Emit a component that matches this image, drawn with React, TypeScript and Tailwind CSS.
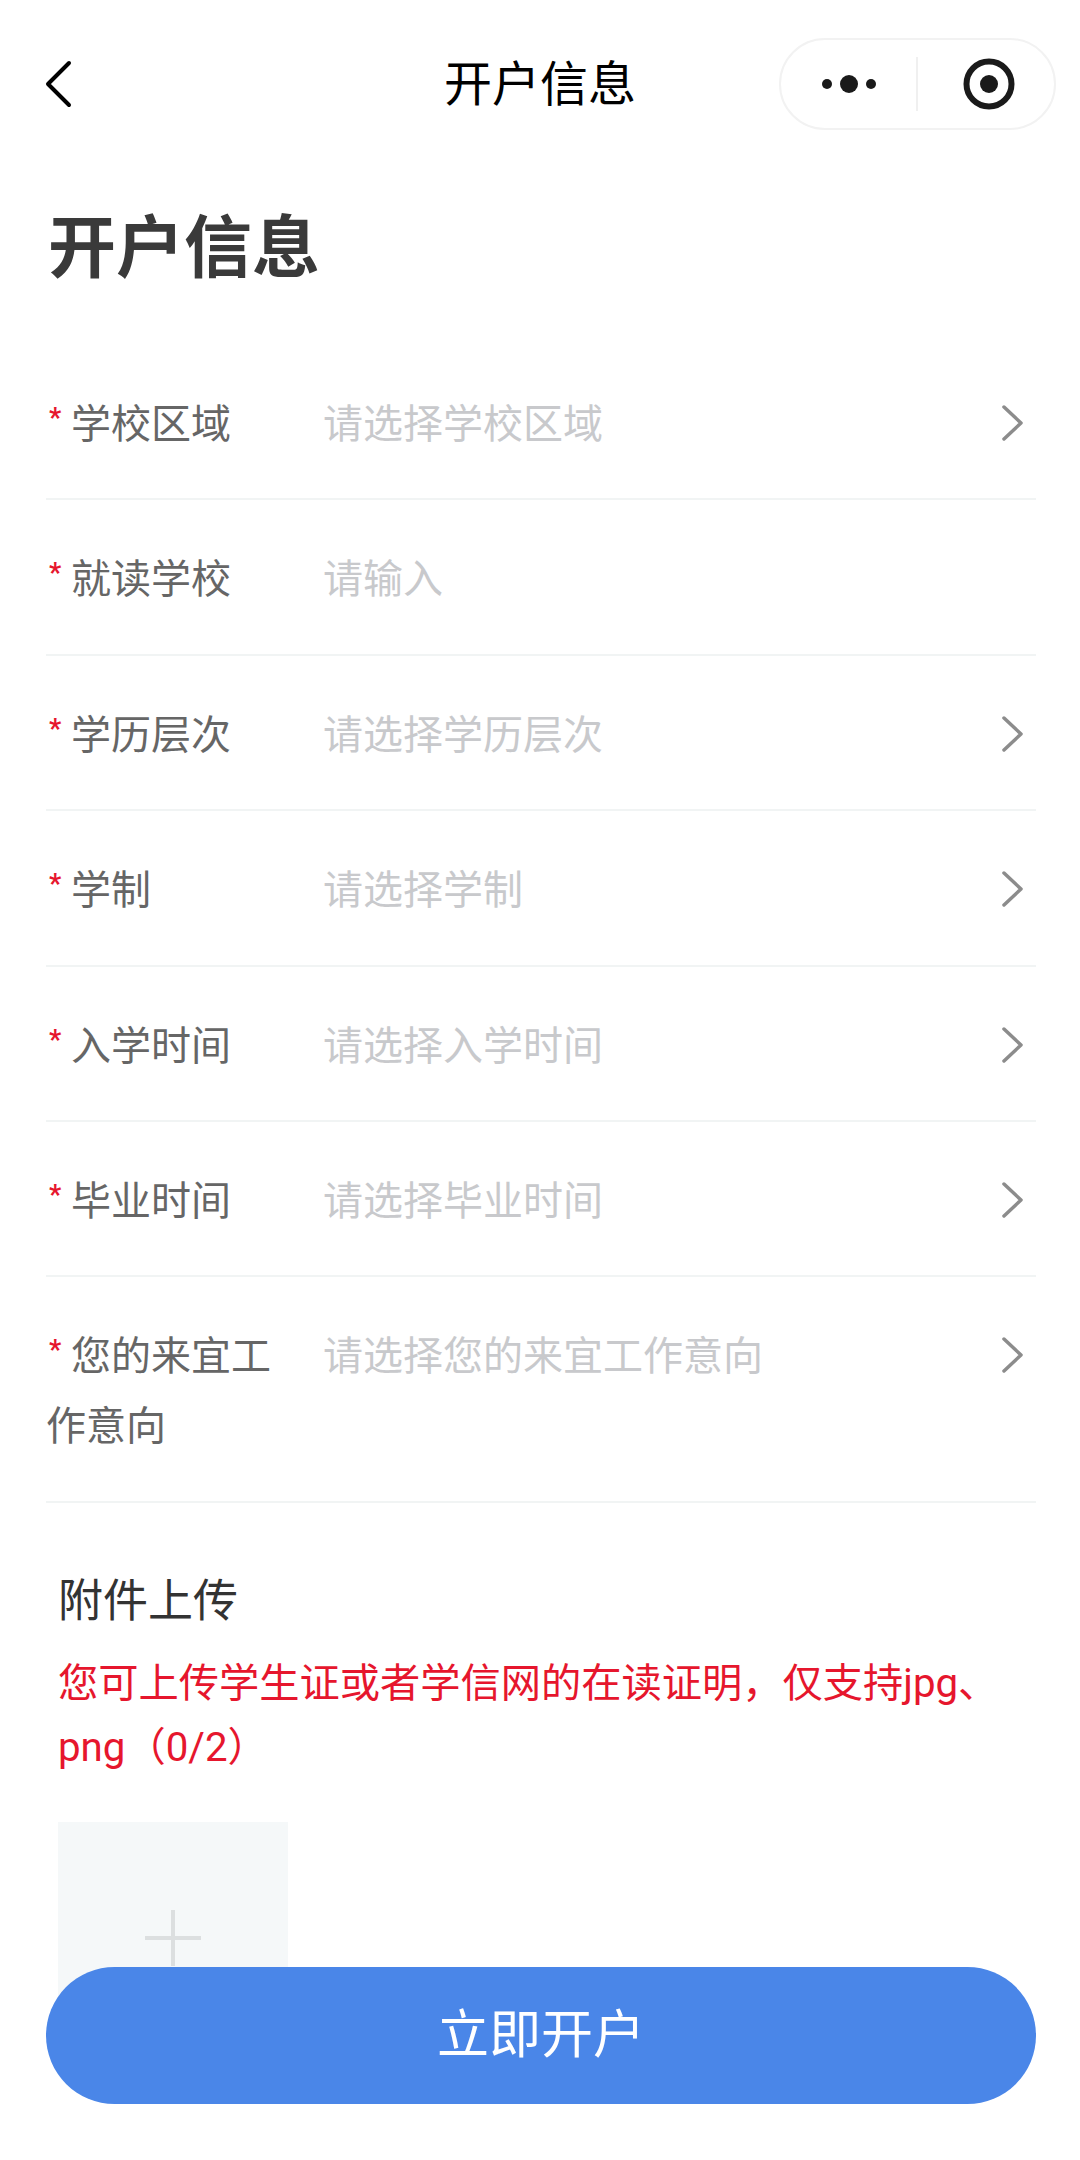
import React from 'react';

const FONT = "font-['Roboto','Noto_Sans_CJK_SC',sans-serif]";

interface RowData {
  label: string;
  placeholder: string;
  arrow: boolean;
}

const rows: RowData[] = [
  { label: '学校区域', placeholder: '请选择学校区域', arrow: true },
  { label: '就读学校', placeholder: '请输入', arrow: false },
  { label: '学历层次', placeholder: '请选择学历层次', arrow: true },
  { label: '学制', placeholder: '请选择学制', arrow: true },
  { label: '入学时间', placeholder: '请选择入学时间', arrow: true },
  { label: '毕业时间', placeholder: '请选择毕业时间', arrow: true },
  { label: '您的来宜工作意向', placeholder: '请选择您的来宜工作意向', arrow: true },
];

function FormRow({ row }: { row: RowData }) {
  return (
    <div className="flex items-start border-b-2 border-[#f1f4f4] pt-[45px] pb-[38.4px] text-[40px] leading-[70px]">
      <div className="w-[277px] shrink-0 pr-[24px] text-[#666666]">
        <span className="inline-block w-[25px] pl-[3px] align-top text-[27px] leading-[56px] font-bold text-[#e6162d]">*</span>
        {row.label}
      </div>
      <div className="flex-1 text-[#c8c9cc]">{row.placeholder}</div>
      {row.arrow && (
        <svg className="mt-[15px] mr-[13px] h-[36px] w-[21px]" viewBox="0 0 21 36" fill="none">
          <path d="M2 2 L19 18 L2 34" stroke="#8c8c8c" strokeWidth="3.5" strokeLinecap="round" strokeLinejoin="round" />
        </svg>
      )}
    </div>
  );
}

export default function App() {
  return (
    <div className={`relative h-[2160px] w-[1080px] overflow-hidden bg-white ${FONT}`}>
      {/* nav bar */}
      <div className="grid grid-cols-[1fr_auto_1fr] items-center px-[24px] pt-[37px]">
        <svg className="ml-[21px] h-[48px] w-[28px]" viewBox="0 0 28 48" fill="none">
          <path d="M24 3 L3 24 L24 45" stroke="#000000" strokeWidth="4" strokeLinecap="round" strokeLinejoin="round" />
        </svg>
        <div className="pt-[2px] text-[48px] leading-[92px] text-black">开户信息</div>
        <div className="flex h-[92px] w-[277px] items-center justify-self-end rounded-full border-2 border-[#f2f2f2]">
          <div className="flex flex-1 items-center justify-center gap-[8px]">
            <span className="h-[10px] w-[10px] rounded-full bg-[#1a1a1a]" />
            <span className="h-[18px] w-[18px] rounded-full bg-[#1a1a1a]" />
            <span className="h-[10px] w-[10px] rounded-full bg-[#1a1a1a]" />
          </div>
          <div className="h-[54px] w-[2px] bg-[#f0f0f0]" />
          <div className="flex w-[136px] items-center justify-center pl-[6px]">
            <svg className="h-[52px] w-[52px]" viewBox="0 0 52 52" fill="none">
              <circle cx="26" cy="26" r="22.5" stroke="#1a1a1a" strokeWidth="6" />
              <circle cx="26" cy="26" r="9" fill="#1a1a1a" />
            </svg>
          </div>
        </div>
      </div>

      <h1 className="mt-[70px] pl-[48px] text-[68px] leading-[96px] font-bold text-[#3a3a3a]">开户信息</h1>

      <div className="mt-[48px] pr-[44px] pl-[46px]">
        {rows.map((row) => (
          <FormRow key={row.label} row={row} />
        ))}
      </div>

      {/* upload section */}
      <div className="px-[58px] pt-[68px]">
        <div className="text-[45px] leading-[62px] text-[#333333]">附件上传</div>
        <p className="mt-[19px] text-[40.25px] leading-[64px] text-[#e6162d]">
          您可上传学生证或者学信网的在读证明，仅支持jpg、png（0/2）
        </p>
        <div className="mt-[42px] flex h-[230px] w-[230px] items-center justify-center bg-[#f5f8f9]">
          <svg className="mt-[2px] h-[56px] w-[56px]" viewBox="0 0 56 56">
            <path d="M28 0 V56 M0 28 H56" stroke="#dcdfe0" strokeWidth="4" />
          </svg>
        </div>
      </div>

      <button className="absolute bottom-[56px] left-[46px] h-[137px] w-[990px] rounded-full bg-[#4a86e8] text-[52px] text-white">
        立即开户
      </button>
    </div>
  );
}
